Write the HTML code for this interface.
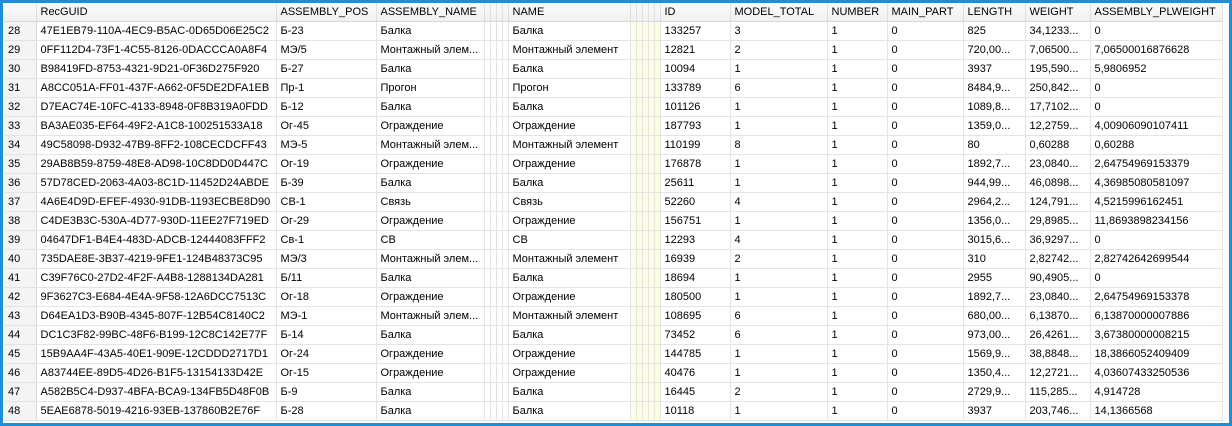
<!DOCTYPE html><html><head><meta charset="utf-8"><style>
body{margin:0;width:1232px;height:426px;overflow:hidden;background:#fff;font-family:"Liberation Sans",sans-serif;font-size:11px;color:#000}
.frame{position:absolute;left:0;top:0;width:1226px;height:420px;border:3px solid #1c8fd8;overflow:hidden;background:#fff}
table{border-collapse:collapse;table-layout:fixed;position:absolute;left:1px;top:0}
td,th{height:18px;padding:0 0 0 4px;border-right:1px solid #e4e4e4;border-bottom:1px solid #e4e4e4;white-space:nowrap;overflow:hidden;text-align:left;font-weight:normal;line-height:18px}
th{height:18px;line-height:18px;background:linear-gradient(#fbfbfb,#f0f0f0);border-right:1px solid #e0e0e0;border-bottom:1px solid #d8d8d8}
td.n{background:#f4f4f4;border-right:1px solid #d8d8d8}
td.y{background:#fdfde4}
td.e,th.e{padding:0}
</style></head><body><div class="frame"><table>
<colgroup><col style="width:32px"><col style="width:240px"><col style="width:100px"><col style="width:108px"><col style="width:6px"><col style="width:6px"><col style="width:6px"><col style="width:6px"><col style="width:122px"><col style="width:6px"><col style="width:6px"><col style="width:6px"><col style="width:6px"><col style="width:6px"><col style="width:70px"><col style="width:97px"><col style="width:60px"><col style="width:76px"><col style="width:62px"><col style="width:65px"><col style="width:132px"></colgroup>
<tr><th></th><th>RecGUID</th><th>ASSEMBLY_POS</th><th>ASSEMBLY_NAME</th><th class="e"></th><th class="e"></th><th class="e"></th><th class="e"></th><th>NAME</th><th class="e"></th><th class="e"></th><th class="e"></th><th class="e"></th><th class="e"></th><th>ID</th><th>MODEL_TOTAL</th><th>NUMBER</th><th>MAIN_PART</th><th>LENGTH</th><th>WEIGHT</th><th>ASSEMBLY_PLWEIGHT</th></tr>
<script>
var r=[
[28,"47E1EB79-110A-4EC9-B5AC-0D65D06E25C2","Б-23","Балка","Балка","133257","3","825","34,1233...","0"],
[29,"0FF112D4-73F1-4C55-8126-0DACCCA0A8F4","МЭ/5","Монтажный элем...","Монтажный элемент","12821","2","720,00...","7,06500...","7,06500016876628"],
[30,"B98419FD-8753-4321-9D21-0F36D275F920","Б-27","Балка","Балка","10094","1","3937","195,590...","5,9806952"],
[31,"A8CC051A-FF01-437F-A662-0F5DE2DFA1EB","Пр-1","Прогон","Прогон","133789","6","8484,9...","250,842...","0"],
[32,"D7EAC74E-10FC-4133-8948-0F8B319A0FDD","Б-12","Балка","Балка","101126","1","1089,8...","17,7102...","0"],
[33,"BA3AE035-EF64-49F2-A1C8-100251533A18","Ог-45","Ограждение","Ограждение","187793","1","1359,0...","12,2759...","4,00906090107411"],
[34,"49C58098-D932-47B9-8FF2-108CECDCFF43","МЭ-5","Монтажный элем...","Монтажный элемент","110199","8","80","0,60288","0,60288"],
[35,"29AB8B59-8759-48E8-AD98-10C8DD0D447C","Ог-19","Ограждение","Ограждение","176878","1","1892,7...","23,0840...","2,64754969153379"],
[36,"57D78CED-2063-4A03-8C1D-11452D24ABDE","Б-39","Балка","Балка","25611","1","944,99...","46,0898...","4,36985080581097"],
[37,"4A6E4D9D-EFEF-4930-91DB-1193ECBE8D90","СВ-1","Связь","Связь","52260","4","2964,2...","124,791...","4,5215996162451"],
[38,"C4DE3B3C-530A-4D77-930D-11EE27F719ED","Ог-29","Ограждение","Ограждение","156751","1","1356,0...","29,8985...","11,8693898234156"],
[39,"04647DF1-B4E4-483D-ADCB-12444083FFF2","Св-1","СВ","СВ","12293","4","3015,6...","36,9297...","0"],
[40,"735DAE8E-3B37-4219-9FE1-124B48373C95","МЭ/3","Монтажный элем...","Монтажный элемент","16939","2","310","2,82742...","2,82742642699544"],
[41,"C39F76C0-27D2-4F2F-A4B8-1288134DA281","Б/11","Балка","Балка","18694","1","2955","90,4905...","0"],
[42,"9F3627C3-E684-4E4A-9F58-12A6DCC7513C","Ог-18","Ограждение","Ограждение","180500","1","1892,7...","23,0840...","2,64754969153378"],
[43,"D64EA1D3-B90B-4345-807F-12B54C8140C2","МЭ-1","Монтажный элем...","Монтажный элемент","108695","6","680,00...","6,13870...","6,13870000007886"],
[44,"DC1C3F82-99BC-48F6-B199-12C8C142E77F","Б-14","Балка","Балка","73452","6","973,00...","26,4261...","3,67380000008215"],
[45,"15B9AA4F-43A5-40E1-909E-12CDDD2717D1","Ог-24","Ограждение","Ограждение","144785","1","1569,9...","38,8848...","18,3866052409409"],
[46,"A83744EE-89D5-4D26-B1F5-13154133D42E","Ог-15","Ограждение","Ограждение","40476","1","1350,4...","12,2721...","4,03607433250536"],
[47,"A582B5C4-D937-4BFA-BCA9-134FB5D48F0B","Б-9","Балка","Балка","16445","2","2729,9...","115,285...","4,914728"],
[48,"5EAE6878-5019-4216-93EB-137860B2E76F","Б-28","Балка","Балка","10118","1","3937","203,746...","14,1366568"]];
var h="";r.forEach(function(a){h+='<tr><td class="n">'+a[0]+'</td><td>'+a[1]+'</td><td>'+a[2]+'</td><td>'+a[3]+'</td><td class="e"></td><td class="e"></td><td class="e"></td><td class="e"></td><td>'+a[4]+'</td><td class="e y"></td><td class="e y"></td><td class="e y"></td><td class="e y"></td><td class="e y"></td><td>'+a[5]+'</td><td>'+a[6]+'</td><td>1</td><td>0</td><td>'+a[7]+'</td><td>'+a[8]+'</td><td>'+a[9]+'</td></tr>';});
document.write(h);
</script>
</table></div></body></html>
